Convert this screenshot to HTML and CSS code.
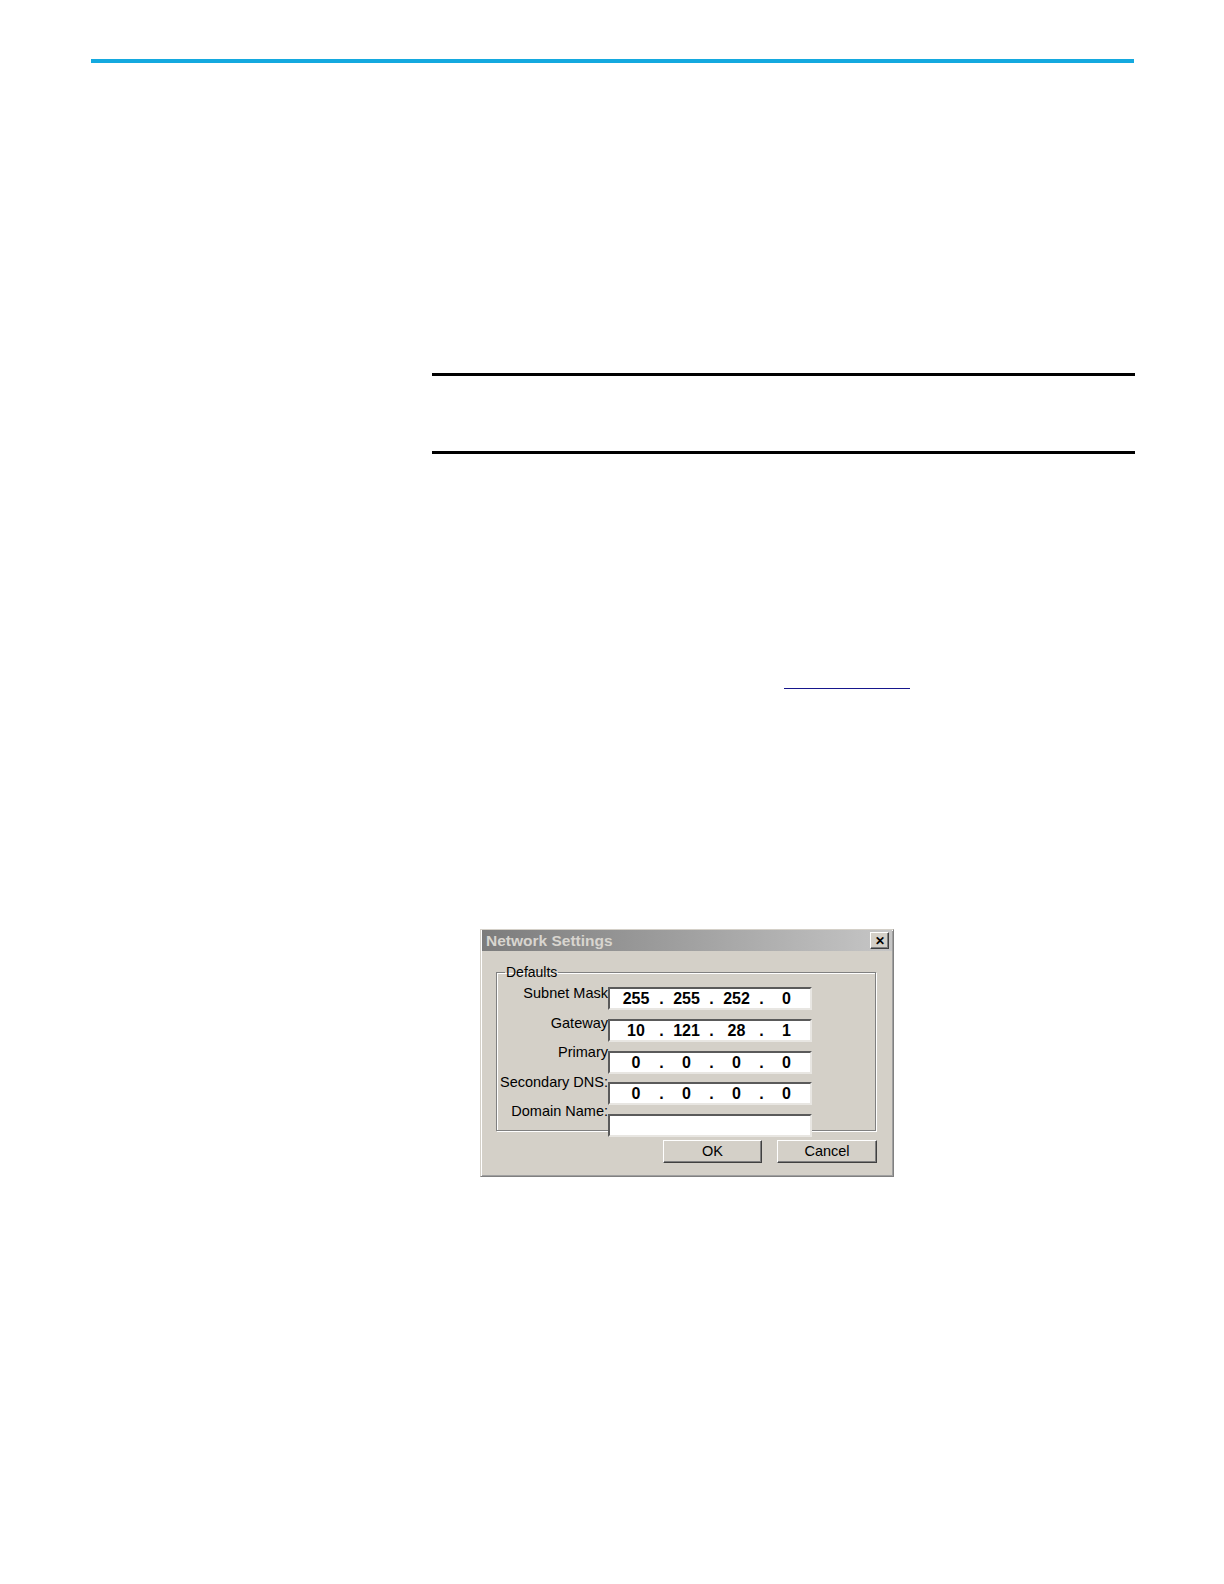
FILE: index.html
```html
<!DOCTYPE html>
<html>
<head>
<meta charset="utf-8">
<link rel="stylesheet" href="styles.css">
</head>
<body>
<div class="page">
  <div class="topbar"></div>
  <div class="content">
    <div class="note"></div>
    <div class="link-line"></div>
    <div class="dialog">
      <div class="titlebar">
        <span class="title">Network Settings</span>
        <span class="close">&#x2715;</span>
      </div>
      <div class="dlg-body">
        <fieldset class="group">
          <legend>Defaults</legend>
          <div class="form">
            <div class="labels">
              <span class="label">Subnet Mask</span>
              <span class="label">Gateway</span>
              <span class="label">Primary</span>
              <span class="label">Secondary DNS:</span>
              <span class="label">Domain Name:</span>
            </div>
            <div class="fields">
              <div class="field">
                <span class="oct">255</span><span class="dot">.</span><span class="oct">255</span><span class="dot">.</span><span class="oct">252</span><span class="dot">.</span><span class="oct">0</span>
              </div>
              <div class="field">
                <span class="oct">10</span><span class="dot">.</span><span class="oct">121</span><span class="dot">.</span><span class="oct">28</span><span class="dot">.</span><span class="oct">1</span>
              </div>
              <div class="field">
                <span class="oct">0</span><span class="dot">.</span><span class="oct">0</span><span class="dot">.</span><span class="oct">0</span><span class="dot">.</span><span class="oct">0</span>
              </div>
              <div class="field">
                <span class="oct">0</span><span class="dot">.</span><span class="oct">0</span><span class="dot">.</span><span class="oct">0</span><span class="dot">.</span><span class="oct">0</span>
              </div>
              <div class="field"></div>
            </div>
          </div>
        </fieldset>
        <div class="buttons">
          <div class="btn btn-ok">OK</div>
          <div class="btn btn-cancel">Cancel</div>
        </div>
      </div>
    </div>
  </div>
</div>
</body>
</html>
```
FILE: styles.css
```css
html, body {
  margin: 0;
  padding: 0;
  background: #ffffff;
}
body {
  font-family: "Liberation Sans", Arial, sans-serif;
}
.page {
  padding: 59px 0 0 91px;
  width: 1043px;
}
.topbar {
  height: 4px;
  background: #14a9df;
}
.content {
  margin-left: 341px;
  width: 703px;
}
.note {
  margin-top: 310px;
  height: 75px;
  border-top: 3px solid #000;
  border-bottom: 3px solid #000;
}
.link-line {
  margin-top: 234px;
  margin-left: 352px;
  width: 126px;
  height: 1px;
  background: #16168c;
}
.dialog {
  margin-top: 240px;
  margin-left: 48px;
  width: 412px;
  height: 246px;
  background: #d4d0c8;
  border: 1px solid #808080;
  border-top-color: #d4d0c8;
  border-left-color: #d4d0c8;
  box-shadow: inset 1px 1px 0 #ffffff, inset -1px -1px 0 #a0a0a0;
  display: flex;
  flex-direction: column;
}
.titlebar {
  margin: 0 1px;
  height: 21px;
  background: linear-gradient(to right, #7c7c7c 0%, #a4a4a4 55%, #c6c6c6 100%);
  display: flex;
  align-items: center;
  justify-content: space-between;
  padding: 0 3px 0 4px;
}
.title {
  font-weight: bold;
  font-size: 15.5px;
  color: #d8d5cf;
}
.close {
  width: 17px;
  height: 15px;
  background: #d4d0c8;
  border: 1px solid #404040;
  border-top-color: #ffffff;
  border-left-color: #ffffff;
  box-shadow: inset -1px -1px 0 #808080;
  font-size: 12px;
  font-weight: bold;
  color: #000;
  display: flex;
  align-items: center;
  justify-content: center;
  line-height: 1;
}
.dlg-body {
  padding: 14px 0 0 15px;
}
.group {
  margin: 0;
  padding: 0;
  box-sizing: border-box;
  height: 166px;
  width: 380px;
  border: 1px solid #808080;
  box-shadow: 1px 1px 0 #ffffff, inset 1px 1px 0 #ffffff;
}
.group legend {
  font-size: 14px;
  color: #000;
  padding: 0 1px;
  margin-left: 8px;
  line-height: 14px;
}
.form {
  margin-top: 8px;
  display: flex;
  align-items: flex-start;
}
.labels {
  width: 111px;
  margin-top: -1px;
  display: flex;
  flex-direction: column;
  align-items: flex-end;
  gap: 15px;
}
.label {
  font-size: 14.5px;
  line-height: 14.5px;
  color: #000;
  white-space: nowrap;
}
.fields {
  display: flex;
  flex-direction: column;
  gap: 8.75px;
}
.field {
  height: 19px;
  width: 194.5px;
  padding-left: 5.5px;
  background: #ffffff;
  border-top: 2px solid #5a5a5a;
  border-left: 2px solid #5a5a5a;
  border-right: 2px solid #e8e6e2;
  border-bottom: 2px solid #e8e6e2;
  display: grid;
  grid-template-columns: 41px 10px 40px 10px 40px 10px 40px;
  align-items: center;
  font-weight: bold;
  font-size: 16px;
  line-height: 19px;
  color: #000;
}
.oct, .dot {
  text-align: center;
}
.buttons {
  display: flex;
  gap: 15px;
  margin-top: 9px;
  margin-left: 167px;
}
.btn {
  height: 21px;
  background: #d4d0c8;
  border: 1px solid #404040;
  border-top-color: #ffffff;
  border-left-color: #ffffff;
  box-shadow: inset -1px -1px 0 #808080;
  font-size: 14.5px;
  line-height: 21px;
  text-align: center;
  color: #000;
}
.btn-ok {
  width: 97px;
}
.btn-cancel {
  width: 98px;
}
```
